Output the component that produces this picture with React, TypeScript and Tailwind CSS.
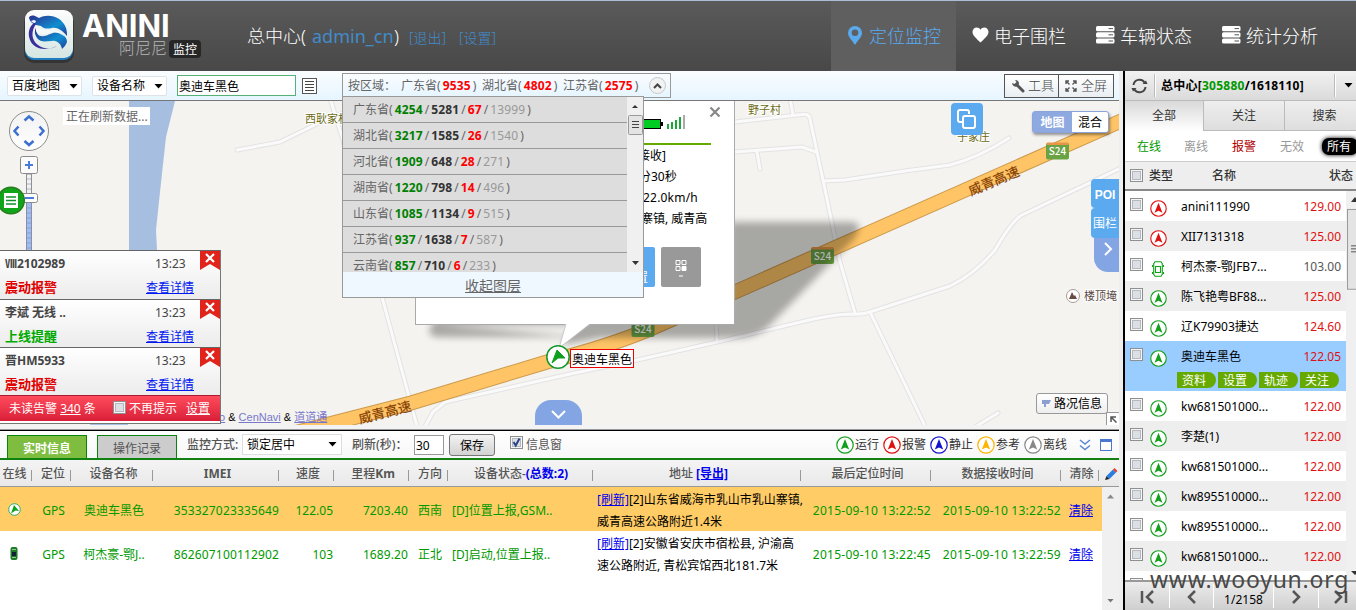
import React from 'react';

const sans = "font-['Noto_Sans','Noto_Sans_CJK_SC',sans-serif]";

type NavProps = { icon: React.ReactNode; label: string; active?: boolean; cls: string };

function NavItem({ icon, label, active, cls }: NavProps) {
  return (
    <div className={`flex h-full items-center ${cls} ${active ? 'bg-[#5f5f5f] text-[#5baaf0]' : 'text-white'}`}>
      {icon}
      <span className="text-[18px] font-light leading-[24px]">{label}</span>
    </div>
  );
}

function ServerIcon() {
  return (
    <svg width="19" height="18" viewBox="0 0 19 18" className="mb-[3px] mr-[5px] shrink-0">
      {[0, 6.2, 12.4].map((y) => (
        <g key={y}>
          <rect x="0" y={y} width="18.500" height="5.2" rx="1.500" fill="#fff" />
          <path d={`M12.500 ${y + 2.6}h4.500`} stroke="#555" strokeWidth="1" />
        </g>
      ))}
    </svg>
  );
}

function Logo() {
  return (
    <svg width="54" height="56" viewBox="0 0 54 56" className="shrink-0">
      <defs>
        <linearGradient id="tile" x1="0" y1="0" x2="0" y2="1">
          <stop offset="0" stopColor="#fdfdfd" />
          <stop offset="1" stopColor="#d5e6e2" />
        </linearGradient>
        <linearGradient id="globe" x1="0" y1="0" x2="1" y2="1">
          <stop offset="0" stopColor="#2a2f8f" />
          <stop offset="0.6" stopColor="#0f8fd0" />
          <stop offset="1" stopColor="#223a9a" />
        </linearGradient>
      </defs>
      <rect x="2" y="3" width="50" height="51" rx="10" fill="#222" opacity=".55" />
      <rect x="3" y="2" width="48" height="49" rx="9" fill="#1f7cc0" />
      <rect x="3" y="1" width="48" height="48" rx="9" fill="url(#tile)" />
      <path d="M7 9c0-2 3-3 6-2l4 2c10-5 23-1 27 10 1 3 1 6 1 8-5-6-10-9-15-8-5 1-8 1-11-2-2 0-3-1-5-1-3-1-6-3-7-7z" fill="url(#globe)" />
      <path d="M14 15c-5 7-5 16 2 21 5 4 12 5 19 1-10 5-23 4-27-6-3-8 0-14 4-17z" fill="#3a2f9a" />
      <path d="M14 19c0 6 3 9 8 8 6-1 9-5 15-3 5 1 8 5 8 9-1 3-3 5-5 7-1-5-5-9-10-8-6 0-11 2-15-3-2-3-3-7-1-10z" fill="url(#globe)" />
      <path d="M12 11l2 1-1 2c-2 0-3-1-4-2z" fill="#f4f8fa" />
      <path d="M14 17c4 2 6 5 11 4 7-1 12-1 18 7-5-4-10-6-15-4-6 2-11 2-14-2z" fill="#f4f8fa" opacity=".9" />
    </svg>
  );
}

function Header() {
  return (
    <header className="flex h-[71px] shrink-0 items-stretch border-t border-[#a9bdd4] bg-gradient-to-b from-[#5a5a5a] to-[#484848]">
      <div className="flex w-[210px] pl-[22px] pt-[8px]">
        <Logo />
        <div className="ml-[6px] flex flex-col">
          <div className="mt-[4px] font-['Inter',sans-serif] text-[31px] font-bold leading-[26px] text-white">ANINI</div>
          <div className="mt-px flex items-end whitespace-nowrap">
            <span className="ml-[37px] h-[18px] text-[16px] font-light leading-[17px] text-[#b8b8b8]">阿尼尼</span>
            <span className="relative -mr-8 ml-[2px] h-[18px] w-[32px] rounded bg-[#262626] text-center text-[12px] leading-[19px] text-white">
              监控
            </span>
          </div>
        </div>
      </div>
      <div className="flex w-[621px] items-center whitespace-nowrap pl-[37px] text-[18px] font-light text-white">
        <span className="w-[65px]">总中心(</span>
        <span className="w-[82px] font-normal text-[#428bca]">admin_cn</span>
        <span className="w-[15px]">)</span>
        <span className="w-[50px] pt-[2px] text-[14px] text-[#428bca]">[退出]</span>
        <span className="pt-[2px] text-[14px] text-[#428bca]">[设置]</span>
      </div>
      <NavItem
        active
        cls="w-[125px] pl-[16px]"
        label="定位监控"
        icon={
          <svg width="16" height="20" viewBox="0 0 16 20" className="mb-[3px] mr-[6px] shrink-0">
            <path fillRule="evenodd" d="M8 1a7 7 0 0 0-7 7c0 4 4 7 7 12 3-5 7-8 7-12a7 7 0 0 0-7-7zm0 3.500a3.300 3.300 0 1 1 0 6.600a3.300 3.300 0 0 1 0-6.600z" fill="#5baaf0" />
          </svg>
        }
      />
      <NavItem
        cls="w-[140px] pl-[16px]"
        label="电子围栏"
        icon={
          <svg width="17" height="16" viewBox="0 0 17 16" className="mb-[3px] mr-[5px] shrink-0">
            <path d="M8.500 15.500C5 12 .5 8.500.5 5 .5 2.300 2.400.5 4.700.5c1.700 0 3 .9 3.800 2.300C9.300 1.400 10.600.5 12.300.5c2.300 0 4.200 1.800 4.200 4.500 0 3.500-4.500 7-8 10.500z" fill="#fff" />
          </svg>
        }
      />
      <NavItem cls="w-[126px]" label="车辆状态" icon={<ServerIcon />} />
      <NavItem cls="w-[130px]" label="统计分析" icon={<ServerIcon />} />
    </header>
  );
}

function Caret({ className = '' }: { className?: string }) {
  return (
    <svg width="9" height="5" viewBox="0 0 9 5" className={className}>
      <path d="M.5 0h8l-4 4.500z" fill="#000" />
    </svg>
  );
}

function MapToolbar() {
  return (
    <div className="flex h-[30px] shrink-0 items-center border-b border-[#777] bg-gradient-to-b from-[#fafdff] to-[#e6f5ff] pl-[7px] pr-[5px] text-[12px]">
      <div className="flex h-[20px] w-[75px] items-center justify-between rounded-[2px] border border-[#dde3e8] bg-white pl-[4px] pr-[3px] pt-px">
        百度地图
        <Caret />
      </div>
      <div className="ml-[10px] flex h-[20px] w-[75px] items-center justify-between rounded-[2px] border border-[#dde3e8] bg-white pl-[4px] pr-[3px] pt-px">
        设备名称
        <Caret />
      </div>
      <div className="ml-[10px] flex h-[21px] w-[119px] items-center border border-[#55b177] bg-white pl-px pt-[2px]">奥迪车黑色</div>
      <svg width="15" height="16" viewBox="0 0 15 16" className="ml-[6px]">
        <rect x=".5" y=".5" width="14" height="15" fill="#fff" stroke="#555" />
        <path d="M3 3.500h9M3 6.500h9M3 9.500h9M3 12.500h9" stroke="#444" strokeWidth="1.200" />
      </svg>
      <div className="ml-auto flex h-[24px] border border-[#555] bg-gradient-to-b from-white to-[#e9eef2] text-[13px] font-light text-[#444]">
        <div className="flex w-[54px] items-center border-r border-[#555] pl-[6px]">
          <svg width="14" height="14" viewBox="0 0 14 14" className="mr-[3px]">
            <path d="M6 6l6 6" stroke="#555" strokeWidth="3" strokeLinecap="round" />
            <path d="M4 1l1.500 2-2 2L1 4a4 4 0 0 0 5 3.500L8 5A4 4 0 0 0 4 1z" fill="#555" />
          </svg>
          工具
        </div>
        <div className="flex w-[54px] items-center pl-[6px]">
          <svg width="12" height="12" viewBox="0 0 12 12" className="mr-[4px]" stroke="#555" fill="none" strokeWidth="1.400">
            <path d="M1 4V1h3M8 1h3v3M11 8v3H8M4 11H1V8M1 1l3.500 3.500M11 1L7.500 4.500M11 11L7.500 7.500M1 11l3.500-3.500" />
          </svg>
          全屏
        </div>
      </div>
    </div>
  );
}

const roads = [
  'M735 122L802 114.500Q809 113 810 119L823 180L840 262L855 313',
  'M790 98L793 115',
  'M735 152L802 147L816 152',
  'M757 152L760 169',
  'M823 181L845 180L905 171L950 165Q980 157 1009 138',
  'M1125 166L1020 216Q1010 224 995 250Q975 274 950 286L870 312Q862 315 850 314Q830 315 805 321L717 342L633 361L570 374L445 402L433 412L423 430',
  'M870 312L927 430',
  'M970 430L998 413',
  'M716 320L717 341',
  'M237 150L280 142L325 120L345 112',
  'M330 98L343 140L382 297L418 430',
];

function MapDrawing() {
  return (
    <svg width="1119" height="324" viewBox="0 101 1119 324" className="absolute left-0 top-0 font-['Noto_Sans_CJK_SC',sans-serif]">
      <defs>
        <filter id="soft" x="-10%" y="-20%" width="120%" height="140%">
          <feGaussianBlur stdDeviation="3.500" />
        </filter>
      </defs>
      <rect x="0" y="101" width="1119" height="324" fill="#f4f3ef" />
      <path d="M129 101H175L166 137L160 192L156 230L157 250L150 330L128 425H90L120 330L129 250Z" fill="#a6bfe0" />
      <g fill="none" strokeLinecap="round" strokeLinejoin="round">
        {roads.map((d) => (
          <path key={d} d={d} stroke="#e3e3e3" strokeWidth="5" />
        ))}
        {roads.map((d) => (
          <path key={d} d={d} stroke="#fafafa" strokeWidth="3" />
        ))}
        <path d="M1130 117L735 292L650 329Q610 346 547 362L411 403L290 434" stroke="#cd9a4c" strokeWidth="15" />
        <path d="M1130 117L735 292L650 329Q610 346 547 362L411 403L290 434" stroke="#fec466" strokeWidth="13" />
      </g>
      <g fontSize="11" fill="#6b6a12" stroke="#fff" strokeWidth="2" paintOrder="stroke">
        <text x="305" y="123">西耿家村</text>
        <text x="748" y="114">野子村</text>
        <text x="957" y="141">于家庄</text>
        <text x="1084" y="300" fill="#5a4a44">楼顶埯</text>
      </g>
      <g fontSize="13.500" fontWeight="500" fill="#8a4508">
        <text transform="translate(971 196) rotate(-23)">威青高速</text>
        <text transform="translate(360 424) rotate(-14.500)">威青高速</text>
      </g>
      {[
        [1057.5, 151.5],
        [822.5, 256],
        [643, 329],
      ].map(([x, y]) => (
        <g key={x}>
          <rect x={x - 11.500} y={y - 8.500} width="23" height="16.500" rx="2" fill="#6aa343" />
          <rect x={x - 11} y={y - 9} width="22" height="2.500" rx="1.200" fill="#e8954a" />
          <text x={x} y={y + 3.500} textAnchor="middle" fontSize="10" fontWeight="500" fill="#fff">S24</text>
        </g>
      ))}
      <circle cx="1073" cy="296" r="6.500" fill="#fff" stroke="#a89c98" />
      <path d="M1069 299l3-7 2 4 1-1 2 4z" fill="#6b4a42" />
      <path d="M435 325H575L562 345L600 338H740Q757 337 768 327L853 240Q866 222 850 222H730V315H440Q420 335 437 337H560L600 338" fill="#000" opacity=".31" filter="url(#soft)" />
    </svg>
  );
}

function MapControls() {
  return (
    <svg width="60" height="150" viewBox="0 101 60 150" className="absolute left-0 top-0">
      <defs>
        <linearGradient id="pan" x1="0" y1="0" x2="0" y2="1">
          <stop offset="0" stopColor="#f2f2f2" />
          <stop offset="1" stopColor="#fff" />
        </linearGradient>
      </defs>
      <circle cx="29" cy="131" r="19.500" fill="url(#pan)" stroke="#8b8b8b" />
      <path d="M24.500 120.500l4.500-4 4.500 4M24.500 141l4.500 4 4.500-4M18.500 126.500l-4 4.500 4 4.500M39.500 126.500l4 4.500-4 4.500" fill="none" stroke="#3d6fd0" strokeWidth="2.500" />
      <rect x="26.500" y="174" width="5" height="80" fill="#f1f1f1" stroke="#909090" />
      <rect x="27" y="203" width="4" height="50" fill="#9dbcff" />
      <path d="M27 179h4M27 184h4M27 189h4M27 208h4M27 213h4M27 218h4M27 223h4M27 228h4M27 233h4M27 238h4M27 243h4M27 248h4" stroke="#7b8db5" strokeWidth=".6" />
      <rect x="20.500" y="156.500" width="17" height="17" rx="2" fill="#fbfbfb" stroke="#8b8b8b" />
      <path d="M25 165h8M29 161v8" stroke="#4a7be0" strokeWidth="2" />
      <rect x="20.500" y="193.500" width="17" height="9" rx="2" fill="#fff" stroke="#8b8b8b" />
      <path d="M25 198h9" stroke="#4a7be0" strokeWidth="2" />
      <circle cx="11" cy="200.500" r="13.300" fill="#10a418" stroke="#2a7a20" strokeWidth="1.400" />
      <rect x="4" y="193" width="14" height="15" fill="#fff" />
      <path d="M6 197h10M6 200.500h10M6 204h10" stroke="#10902a" strokeWidth="1.500" />
    </svg>
  );
}

const provinces: [string, number, number, number, number][] = [
  ['广东省', 4254, 5281, 67, 13999],
  ['湖北省', 3217, 1585, 26, 1540],
  ['河北省', 1909, 648, 28, 271],
  ['湖南省', 1220, 798, 14, 496],
  ['山东省', 1085, 1134, 9, 515],
  ['江苏省', 937, 1638, 7, 587],
  ['云南省', 857, 710, 6, 233],
];

function RegionPanel() {
  return (
    <div className="absolute left-[342px] top-[73px] text-[12px] text-[#666]">
      <div className="flex h-[25px] w-[329px] items-center whitespace-nowrap border border-[#999] bg-gradient-to-b from-[#fafdff] to-[#e6f5ff] pl-[5px]">
        <span className="w-[53px]">按区域：</span>
        {[
          ['广东省', '9535'],
          ['湖北省', '4802'],
          ['江苏省', '2575'],
        ].map(([n, v]) => (
          <span key={n} className="w-[81px]">
            {n}(<b className="mx-[2px] tracking-[0.150px] text-[#f00]">{v}</b>)
          </span>
        ))}
        <span className="ml-[5px] flex h-[17px] w-[17px] items-center justify-center rounded-full border border-[#c8c8c8] bg-[#f2f2f2]">
          <svg width="9" height="6" viewBox="0 0 9 6"><path d="M1 5l3.500-3.500L8 5" fill="none" stroke="#444" strokeWidth="2" /></svg>
        </span>
      </div>
      <div className="relative -mt-[2px] w-[302px] border border-[#999] bg-[#f0f8ff]">
        <div className="flex h-[175px]">
          <div className="w-[284px] overflow-hidden bg-[#ddd]">
            {provinces.map(([n, a, b, c, d]) => (
              <div key={n} className="h-[26px] whitespace-nowrap border-b border-[#999] pl-[10px] leading-[26px]">
                {n}(<b className="mx-[2px] tracking-[0.150px] text-[#008000]">{a}</b>/<b className="mx-[2px] tracking-[0.150px] text-[#333]">{b}</b>/
                <b className="mx-[2px] tracking-[0.150px] text-[#f00]">{c}</b>/<span className="mx-[2px] tracking-[0.150px] text-[#999]">{d}</span>)
              </div>
            ))}
          </div>
          <div className="flex w-[16px] flex-col items-center justify-between bg-[#f0f0f0] py-[6px]">
            <svg width="16" height="36" viewBox="0 0 16 36" className="shrink-0">
              <path d="M5 5h6L8 2z" fill="#333" />
              <rect x="1.500" y="12.500" width="14" height="19" rx="1" fill="#e4e4e4" stroke="#999" />
              <path d="M5 18.500h7M5 21.500h7M5 24.500h7" stroke="#444" />
            </svg>
            <svg width="7" height="5" viewBox="0 0 7 5"><path d="M0 0h7L3.500 4z" fill="#333" /></svg>
          </div>
        </div>
        <div className="h-[25px] text-center text-[14px] leading-[27px] underline">收起图层</div>
      </div>
    </div>
  );
}

function InfoWindow() {
  return (
    <>
      <div className="absolute left-[415px] top-0 h-[224px] w-[320px] border border-t-0 border-[#aaa] bg-white text-[12px] text-black">
        <div className="flex h-[42px] items-start justify-end pr-[13px] pt-[5px]">
          <svg width="42" height="16" viewBox="0 0 42 16" className="mr-[24px] mt-[8px]">
            <rect x=".5" y="5.500" width="17" height="9" fill="#0c2" stroke="#000" />
            <rect x="18" y="8" width="2" height="4" fill="#000" />
            <path d="M25 15v-5M29 15V8M33 15V6M37 15V3" stroke="#1fa83a" strokeWidth="2" />
            <path d="M41 15V1" stroke="#aaa" strokeWidth="2" />
          </svg>
          <svg width="12" height="12" viewBox="0 0 12 12"><path d="M1.500 1.500l9 9M10.500 1.500l-9 9" stroke="#888" strokeWidth="2.200" /></svg>
        </div>
        <div className="mr-[23px] border-t-2 border-[#6a0]" />
        <div className="pl-[225px] leading-[21px]">
          <div className="-ml-[3px]">接收]</div>
          <div className="-ml-[2px]">分30秒</div>
          <div className="ml-[2px] tracking-[0.200px]">22.0km/h</div>
          <div className="whitespace-nowrap">寨镇, 威青高</div>
        </div>
        <div className="mt-[18px] flex pl-[199px]">
          <div className="flex h-[40px] w-[40px] items-end justify-end rounded-[2px] bg-[#5baaf0] pr-[7px] text-[12px] text-white">置</div>
          <div className="ml-[6px] flex h-[40px] w-[40px] flex-col items-center rounded-[2px] bg-[#999] pt-[12px]">
            <svg width="12" height="19" viewBox="0 0 12 19" fill="none" stroke="#fff">
              <path d="M1 1.500h4v4H1zM7 1.500h4v4H7zM1 7.500h4v4H1z" />
              <path d="M7 7.500h4v4H7z" fill="#fff" />
              <path d="M4 17h4" />
            </svg>
          </div>
        </div>
      </div>
      <svg width="40" height="50" viewBox="540 322 40 50" className="absolute left-[540px] top-[221px] overflow-visible">
        <path d="M566 322H592L559 348Z" fill="#fff" />
        <path d="M566 324L559 348L590 324.500" stroke="#bbb" strokeWidth=".8" fill="none" />
        <circle cx="558" cy="357" r="11.200" fill="#fff" stroke="#14962a" strokeWidth="1.500" />
        <path d="M557 350l8 8h-7l-6 5z" fill="#10a020" stroke="#10a020" strokeWidth="1" strokeLinejoin="round" />
      </svg>
      <div className="absolute left-[570px] top-[248px] h-[19px] w-[64px] whitespace-nowrap border border-[#e00] bg-white pl-px text-[12px] leading-[19px] text-black">奥迪车黑色</div>
    </>
  );
}

const alerts = [
  { name: 'Ⅷ2102989', kind: '震动报警', color: 'text-[#e00000]' },
  { name: '李斌 无线 ..', kind: '上线提醒', color: 'text-[#0a0]' },
  { name: '晋HM5933', kind: '震动报警', color: 'text-[#e00000]' },
];

function Checkbox({ checked = false }: { checked?: boolean }) {
  return (
    <svg width="13" height="13" viewBox="0 0 13 13" className="shrink-0">
      <rect x=".5" y=".5" width="12" height="12" fill="#f6f6f6" stroke="#8e8f8f" />
      <rect x="2.500" y="2.500" width="8" height="8" fill="#dcdfe3" stroke="#b4b9c0" />
      {checked && <path d="M3.500 6l2.200 3.500L9.500 2.500" fill="none" stroke="#2b4487" strokeWidth="2" />}
    </svg>
  );
}

function Alerts() {
  return (
    <div className="absolute left-0 top-[149px] w-[221px] border-b border-r border-[#777] bg-white pb-[2px] text-[12px]">
      {alerts.map((a, i) => (
        <div key={i} className={`flex border-t border-[#666] bg-gradient-to-b from-white to-[#ececec] ${i === 0 ? 'h-[49px]' : 'h-[48px]'}`}>
          <div className="w-[146px] pl-[5px]">
            <div className="flex h-[25px] items-center justify-between font-bold text-[#444]">
              {a.name}
            </div>
            <div className={`text-[13px] font-bold leading-[22px] ${a.color}`}>{a.kind}</div>
          </div>
          <div className="w-[54px]">
            <div className="h-[25px] pl-[9px] leading-[26px] text-[#444]">13:23</div>
            <div className="leading-[23px] text-[#0018f0] underline">查看详情</div>
          </div>
          <svg width="20" height="19" viewBox="0 0 20 19">
            <path d="M0 0h20v19l-10-6-10 6z" fill="#e0241c" />
            <path d="M6 3l8 8M14 3l-8 8" stroke="#fff" strokeWidth="2.200" />
          </svg>
        </div>
      ))}
      <div className="flex h-[26px] items-center border-t border-[#ad1b33] bg-gradient-to-b from-[#ff4a5c] to-[#d91d38] pl-[9px] pt-px text-white">
        <span className="w-[104px] whitespace-pre">未读告警 <u>340</u> 条</span>
        <span className="mb-[4px]"><Checkbox /></span>
        <span className="ml-[3px] w-[57px]">不再提示</span>
        <u>设置</u>
      </div>
    </div>
  );
}

function MapArea() {
  return (
    <div className="relative h-[324px] shrink-0 overflow-hidden">
      <MapDrawing />
      <div className="absolute left-[63px] top-[6px] h-[18px] w-[87px] whitespace-nowrap bg-white pl-[3px] text-[12px] leading-[19px] text-[#666]">正在刷新数据...</div>
      <MapControls />
      <InfoWindow />
      <div className="absolute left-[951px] top-[2px] flex h-[32px] w-[32px] items-center justify-center rounded-[4px] bg-[#5baaf0]">
        <svg width="20" height="20" viewBox="0 0 20 20" fill="none" stroke="#fff" strokeWidth="2">
          <path d="M5 13H3a2 2 0 0 1-2-2V3a2 2 0 0 1 2-2h7a2 2 0 0 1 2 2v2" />
          <rect x="6" y="7" width="12" height="12" rx="2" />
        </svg>
      </div>
      <div className="absolute left-[1032px] top-[10px] flex h-[22px] w-[77px] rounded-[3px] border border-[#8ba4dc] bg-white text-center text-[12px] leading-[21px] shadow-[1px_2px_3px_rgba(0,0,0,0.4)]">
        <b className="w-[39px] bg-[#8ea8e0] text-white">地图</b>
        <span className="w-[36px] text-black">混合</span>
      </div>
      <div className="absolute right-0 top-[78px] flex flex-col items-end text-center text-[12px] text-white">
        <b className="h-[29px] w-[28px] rounded-l-[4px] bg-[#5baaf0] font-['Liberation_Sans',sans-serif] leading-[32px]">POI</b>
        <span className="h-[30px] w-[28px] rounded-l-[4px] bg-[#5baaf0] leading-[32px]">围栏</span>
        <span className="flex h-[34px] w-[25px] items-center justify-center rounded-bl-[14px] bg-[#84a5e3] pb-[12px] pl-[3px]">
          <svg width="9" height="14" viewBox="0 0 9 14"><path d="M1 1l6 6-6 6" fill="none" stroke="#fff" strokeWidth="2" /></svg>
        </span>
      </div>
      <div className="absolute left-[1036px] top-[292px] flex h-[21px] w-[72px] items-center rounded-[3px] border border-[#999] bg-gradient-to-b from-white to-[#eee] pl-[4px] pt-px text-[12px] text-black">
        <svg width="11" height="11" viewBox="0 0 11 11" className="mr-[2px]"><path d="M1 1h9L8 5H5v3H3V5H1z" fill="#8b9fd0" /></svg>
        路况信息
      </div>
      <div className="absolute bottom-0 right-0 flex h-[13px] w-[13px] items-center justify-center border-l border-t border-[#999] bg-white">
        <svg width="7" height="7" viewBox="0 0 7 7"><path d="M1 6V1h5M1 1l5.500 5.500" fill="none" stroke="#555" strokeWidth="1.500" /></svg>
      </div>
      <div className="absolute left-[535px] top-[299px] flex h-[25px] w-[47px] items-center justify-center rounded-t-[16px] bg-[#84a5e3] pt-[4px]">
        <svg width="15" height="9" viewBox="0 0 15 9"><path d="M1 1l6.500 6.500L14 1" fill="none" stroke="#fff" strokeWidth="2" /></svg>
      </div>
      <div className="absolute bottom-0 left-[219px] whitespace-pre font-['Liberation_Sans','Noto_Sans_CJK_SC',sans-serif] text-[11px] leading-[16px] text-black">
        <u className="text-[#7777cc]">o</u> &amp; <u className="text-[#7777cc]">CenNavi</u> &amp; <u className="text-[#7777cc]">道道通</u>
      </div>
      <Alerts />
    </div>
  );
}

function ArrowDisc({ color, size }: { color: string; size: number }) {
  return (
    <svg width={size} height={size} viewBox="0 0 18 18" className="shrink-0">
      <circle cx="9" cy="9" r="8.200" fill="#fff" stroke={color} strokeWidth="1.200" />
      <path d="M9 3l4.200 10.500L9 11.500l-4.200 2z" fill={color} />
    </svg>
  );
}

const gridCols =
  'grid grid-cols-[32px_39px_82px_126px_55px_75px_39px_145px_208px_130px_130px_38px_20px]';

const rows = [
  {
    bg: 'bg-[#ffcc66]', name: '奥迪车黑色', imei: '353327023335649', speed: '122.05', km: '7203.40', dir: '西南',
    status: '[D]位置上报,GSM..', a1: '[2]山东省威海市乳山市乳山寨镇,', a2: '威青高速公路附近1.4米', t1: '2015-09-10 13:22:52', t2: '2015-09-10 13:22:52', car: false,
  },
  {
    bg: 'bg-white', name: '柯杰豪-鄂J..', imei: '862607100112902', speed: '103', km: '1689.20', dir: '正北',
    status: '[D]启动,位置上报..', a1: '[2]安徽省安庆市宿松县, 沪渝高', a2: '速公路附近, 青松宾馆西北181.7米', t1: '2015-09-10 13:22:45', t2: '2015-09-10 13:22:59', car: true,
  },
];

const legend = [
  ['运行', '#14a01c'],
  ['报警', '#e01010'],
  ['静止', '#1414cc'],
  ['参考', '#ffb400'],
  ['离线', '#888888'],
];

function Head({ children, last }: { children: React.ReactNode; last?: boolean }) {
  return (
    <div className="relative flex items-center justify-center whitespace-nowrap pl-[3px] pt-[2px]">
      {children}
      {!last && <span className="absolute bottom-[5px] right-0 h-[11px] w-px bg-[#999]" />}
    </div>
  );
}

function BottomPanel() {
  return (
    <div className="flex min-h-0 flex-1 flex-col bg-white text-[12px]">
      <div className="h-[6px] shrink-0 border-b border-[#000] bg-[#f3f3f3] pt-[4px]">
        <div className="h-px bg-[#999]" />
      </div>
      <div className="flex h-[29px] shrink-0 items-start border-b-2 border-[#138013] bg-gradient-to-b from-white to-[#f7f7f7] text-[#555]">
        <div className="ml-[7px] mt-[4px] h-[24px] w-[80px] border border-[#0a840a] bg-[#7fbd40] text-center font-bold leading-[25px] text-white">实时信息</div>
        <div className="ml-[10px] mt-[4px] h-[24px] w-[80px] border border-[#0a840a] bg-[#ccc] text-center leading-[25px] text-[#555]">操作记录</div>
        <div className="ml-[10px] w-[55px] font-medium leading-[27px]">监控方式:</div>
        <div className="mt-[3px] flex h-[21px] w-[100px] items-center justify-between border border-[#ddd] bg-white pl-[4px] pr-[4px] text-black">
          锁定居中
          <Caret />
        </div>
        <div className="ml-[10px] w-[62px] whitespace-nowrap font-medium leading-[27px]">刷新(秒)：</div>
        <div className="mt-[4px] h-[20px] w-[30px] border border-[#999] bg-white pl-[1px] leading-[19px] text-black">30</div>
        <div className="ml-[5px] mt-[3px] h-[22px] w-[46px] rounded-[3px] border border-[#777] bg-gradient-to-b from-[#f4f4f4] to-[#d2d2d2] text-center leading-[21px] text-black">保存</div>
        <div className="ml-[15px] mt-[5px]"><Checkbox checked /></div>
        <div className="ml-[3px] leading-[28px]">信息窗</div>
        <div className="ml-auto flex h-[27px] items-center text-[12px] text-[#333]">
          {legend.map(([t, c]) => (
            <span key={t} className="flex w-[47px] items-center whitespace-nowrap">
              <ArrowDisc color={c} size={18} />
              <span className="ml-px pt-px">{t}</span>
            </span>
          ))}
          <svg width="12" height="12" viewBox="0 0 12 12" className="ml-[8px]" fill="none" stroke="#5a86d0" strokeWidth="1.500"><path d="M1 1l5 4 5-4M1 6.500l5 4 5-4" /></svg>
          <svg width="12" height="12" viewBox="0 0 12 12" className="ml-[9px] mr-[7px]"><rect x=".5" y=".5" width="11" height="11" fill="#fff" stroke="#4a78d0" /><path d="M0 1.500h12" stroke="#4a78d0" strokeWidth="3" /></svg>
        </div>
      </div>
      <div className={`${gridCols} h-[27px] shrink-0 border-b border-[#999] bg-gradient-to-b from-[#f4f4f4] to-[#e9e9e9] font-medium text-[#555]`}>
        <Head><span className="mr-[6px]">在线</span></Head>
        <Head>定位</Head>
        <Head>设备名称</Head>
        <Head><b>IMEI</b></Head>
        <Head>速度</Head>
        <Head><span>里程<b>Km</b></span></Head>
        <Head>方向</Head>
        <Head><span className="mr-[2px]">设备状态-<b className="text-[#0000ee]">(总数:2)</b></span></Head>
        <Head><span className="whitespace-pre">地址 <b className="text-[#0000ee] underline">[导出]</b></span></Head>
        <Head>最后定位时间</Head>
        <Head>数据接收时间</Head>
        <Head>清除</Head>
        <Head last>
          <svg width="14" height="14" viewBox="0 0 14 14"><path d="M1 13l1.500-4 3 3z" fill="#222" /><path d="M2.500 9L9 2.500l3 3L5.500 12z" fill="#2a7de0" /><path d="M9 2.500L10.500 1l3 3L12 5.500z" fill="#e0402a" /></svg>
        </Head>
      </div>
      <div className="flex min-h-0 flex-1">
        <div className="w-[1102px]">
          {rows.map((r) => (
            <div key={r.imei} className={`${gridCols} h-[44px] items-center whitespace-nowrap pt-[2px] text-[#090] ${r.bg}`}>
              <div className="mb-[4px] flex justify-center pr-[4px]">
                {r.car ? (
                  <svg width="8" height="13" viewBox="0 0 8 13"><rect x="0.500" y="0" width="7" height="13" rx="2" fill="#1f7a28" /><path d="M2 2.500h4M2 10.500h4" stroke="#8c8" /><rect x="2" y="5" width="4" height="4" fill="#123" /></svg>
                ) : (
                  <svg width="13" height="13" viewBox="0 0 13 13"><circle cx="6.500" cy="6.500" r="5.800" fill="#fff" stroke="#2fae6a" /><path d="M6 2l5 6-3.500-.5L3 10.500z" fill="#10a020" /></svg>
                )}
              </div>
              <div className="pl-[4px] text-center">GPS</div>
              <div className="pl-[4px] text-center">{r.name}</div>
              <div className="text-right tracking-[0.150px]">{r.imei}</div>
              <div className="pr-px text-right">{r.speed}</div>
              <div className="pr-px text-right tracking-[0.100px]">{r.km}</div>
              <div className="pl-[3px] text-center">{r.dir}</div>
              <div className="pl-[4px]">{r.status}</div>
              <div className="pl-[4px] leading-[22px] text-black">
                <div><u className="text-[#0000ee]">[刷新]</u>{r.a1}</div>
                <div>{r.a2}</div>
              </div>
              <div className="text-right tracking-[0.250px]">{r.t1}</div>
              <div className="text-right tracking-[0.250px]">{r.t2}</div>
              <div className="pl-[8px] text-[#0000ee] underline">清除</div>
            </div>
          ))}
        </div>
        <div className="flex flex-1 flex-col items-center justify-between bg-[#f0f0f0] py-[7px]">
          <svg width="7" height="5" viewBox="0 0 7 5"><path d="M0 4.500h7L3.500.5z" fill="#888" /></svg>
          <Caret className="h-[4px] w-[7px] opacity-50" />
        </div>
      </div>
    </div>
  );
}

type Vehicle = { name: string; v: string; kind: string; grey?: boolean };
const vehicles: Vehicle[] = [
  { name: 'anini111990', v: '129.00', kind: 'red' },
  { name: 'XII7131318', v: '125.00', kind: 'red' },
  { name: '柯杰豪-鄂JFB7...', v: '103.00', kind: 'car', grey: true },
  { name: '陈飞艳粤BF88...', v: '125.00', kind: 'green' },
  { name: '辽K79903捷达', v: '124.60', kind: 'green' },
  { name: '奥迪车黑色', v: '122.05', kind: 'sel' },
  { name: 'kw681501000...', v: '122.00', kind: 'green' },
  { name: '李楚(1)', v: '122.00', kind: 'green' },
  { name: 'kw681501000...', v: '122.00', kind: 'green' },
  { name: 'kw895510000...', v: '122.00', kind: 'green' },
  { name: 'kw895510000...', v: '122.00', kind: 'green' },
  { name: 'kw681501000...', v: '122.00', kind: 'green' },
  { name: '', v: '', kind: 'green' },
];

function VehicleRow({ item, index }: { item: Vehicle; index: number }) {
  const sel = item.kind === 'sel';
  const bg = sel ? 'bg-[#99ccff]' : index % 2 === 1 ? 'bg-[#eee]' : 'bg-white';
  return (
    <div className={`${bg} ${sel ? 'h-[50px]' : 'h-[30px]'} shrink-0`}>
      <div className="flex h-[30px] items-center pl-[5px] pr-[5px] pt-[2px]">
        <span className="mb-[5px]"><Checkbox /></span>
        <span className="ml-[7px] mt-[3px] flex w-[31px]">
          {item.kind === 'car' ? (
            <svg width="16" height="16" viewBox="0 0 16 16" fill="none" stroke="#14a01c" strokeWidth="1.100">
              <path d="M5 .7h6l1.300 2v10.600L11 15.300H5L3.700 13.300V2.700z" />
              <rect x="5.500" y="5.500" width="5" height="6" />
              <path d="M2.500 4v2M13.500 4v2M2.500 11v2M13.500 11v2" />
            </svg>
          ) : (
            <ArrowDisc color={item.kind === 'red' ? '#e01010' : '#14a01c'} size={17} />
          )}
        </span>
        <span className="flex-1 whitespace-nowrap text-black">{item.name}</span>
        <span className={item.grey ? 'text-[#555]' : 'text-[#e01010]'}>{item.v}</span>
      </div>
      {sel && (
        <div className="flex gap-[2px] pl-[52px] pt-px text-white">
          {['资料', '设置', '轨迹', '关注'].map((t) => (
            <span key={t} className="h-[16px] w-[39px] rounded-l-[3px] rounded-r-full bg-[#6a0] pl-[5px] leading-[17px]">{t}</span>
          ))}
        </div>
      )}
    </div>
  );
}

const pagers = ['M4 2v12M15 2L9 8l6 6', 'M12 2L6 8l6 6', '', 'M6 2l6 6-6 6', 'M3 2l6 6-6 6M14 2v12'];

function SidePanel() {
  return (
    <aside className="flex w-[231px] flex-col overflow-hidden bg-white text-[12px] text-[#333]">
      <div className="flex h-[30px] shrink-0 items-center border-b border-[#bbb] bg-gradient-to-b from-[#f2f2f2] to-[#dadada] pl-[6px]">
        <svg width="17" height="16" viewBox="0 0 17 16" fill="none" stroke="#444" strokeWidth="2">
          <path d="M2.500 7a6 6 0 0 1 11-2.500M14.500 9a6 6 0 0 1-11 2.500" />
          <path d="M11.500 6h5L15 2.500zM.5 10h5L2 13.500z" fill="#444" stroke="none" />
        </svg>
        <span className="ml-[6px] h-[23px] w-[2px] border-l border-[#bbb] bg-white" />
        <b className="ml-[5px] w-[173px] pt-px tracking-[0.250px] text-black">总中心[<span className="text-[#090]">305880</span>/1618110]</b>
        <span className="h-[23px] w-[2px] border-l border-[#bbb] bg-white" />
        <Caret className="ml-[8px]" />
      </div>
      <div className="flex h-[30px] shrink-0 text-center leading-[30px]">
        <div className="w-[78px] shrink-0 bg-gradient-to-b from-[#d9d9d9] to-white">全部</div>
        <div className="w-[81px] shrink-0 border-b border-l border-[#bbb] bg-gradient-to-b from-[#eee] to-[#dedede]">关注</div>
        <div className="w-[80px] shrink-0 border-b border-l border-[#bbb] bg-gradient-to-b from-[#eee] to-[#dedede]">搜索</div>
      </div>
      <div className="flex h-[30px] shrink-0 items-center pl-[12px] pt-px text-[#999]">
        <span className="w-[47px] shrink-0 text-[#090]">在线</span>
        <span className="w-[48px] shrink-0">离线</span>
        <span className="w-[48px] shrink-0 text-[#b00000]">报警</span>
        <span className="w-[42px] shrink-0">无效</span>
        <span className="h-[17px] w-[36px] shrink-0 rounded-[7px] bg-black pl-[5px] leading-[18px] text-white shadow-[0_0_4px_#000]">所有</span>
      </div>
      <div className="flex h-[30px] shrink-0 items-center border-b-2 border-t border-b-[#888] border-t-[#ccc] bg-[#eee] pl-[5px] font-medium">
        <Checkbox />
        <span className="ml-[6px] w-[63px] pt-px">类型</span>
        <span className="w-[117px] pt-px">名称</span>
        <span className="shrink-0 pt-px">状态</span>
      </div>
      <div className="flex min-h-0 flex-1">
        <div className="flex w-[221px] flex-col overflow-hidden">
          {vehicles.map((v, i) => (
            <VehicleRow key={i} item={v} index={i} />
          ))}
        </div>
        <div className="flex flex-1 flex-col overflow-hidden bg-[#f0f0f0]">
          <svg width="16" height="390" viewBox="0 0 16 390">
            <path d="M5 11h8L9 6z" fill="#333" />
            <rect x="1.500" y="18.500" width="14" height="80" fill="#e4e4e4" stroke="#999" />
            <path d="M5 55h8M5 58h8M5 61h8" stroke="#555" />
            <path d="M5 381h8l-4 4z" fill="#333" />
          </svg>
        </div>
      </div>
      <div className="relative flex h-[30px] shrink-0 items-center border-t-2 border-[#999] bg-gradient-to-b from-[#ececec] to-[#cfcfcf]">
        {pagers.map((d, i) => (
          <div key={i} className={`flex h-[24px] items-center justify-center border-r border-white ${i === 2 ? 'w-[60px]' : 'w-[44.5px]'} shrink-0`}>
            {i === 2 ? <span className="pt-[7px] text-black">1/2158</span> : (
              <svg width="17" height="16" viewBox="0 0 17 16" className="mt-[2px]"><path d={d} fill="none" stroke="#555" strokeWidth="2.500" /></svg>
            )}
          </div>
        ))}
        <span className="absolute -top-[17px] left-[25px] whitespace-nowrap text-[23px] leading-[28px] tracking-[0.750px] text-[#484848]">www.wooyun.org</span>
      </div>
    </aside>
  );
}

export default function App() {
  return (
    <div className={`flex h-[610px] w-[1356px] flex-col overflow-hidden bg-white ${sans} text-[12px] text-black`}>
      <Header />
      <div className="flex min-h-0 flex-1">
        <main className="flex w-[1119px] flex-col">
          <MapToolbar />
          <MapArea />
          <BottomPanel />
        </main>
        <div className="w-[6px] border-r-2 border-black bg-[#eee]" />
        <SidePanel />
      </div>
      <div className="absolute left-0 top-0">
        <RegionPanel />
      </div>
    </div>
  );
}
